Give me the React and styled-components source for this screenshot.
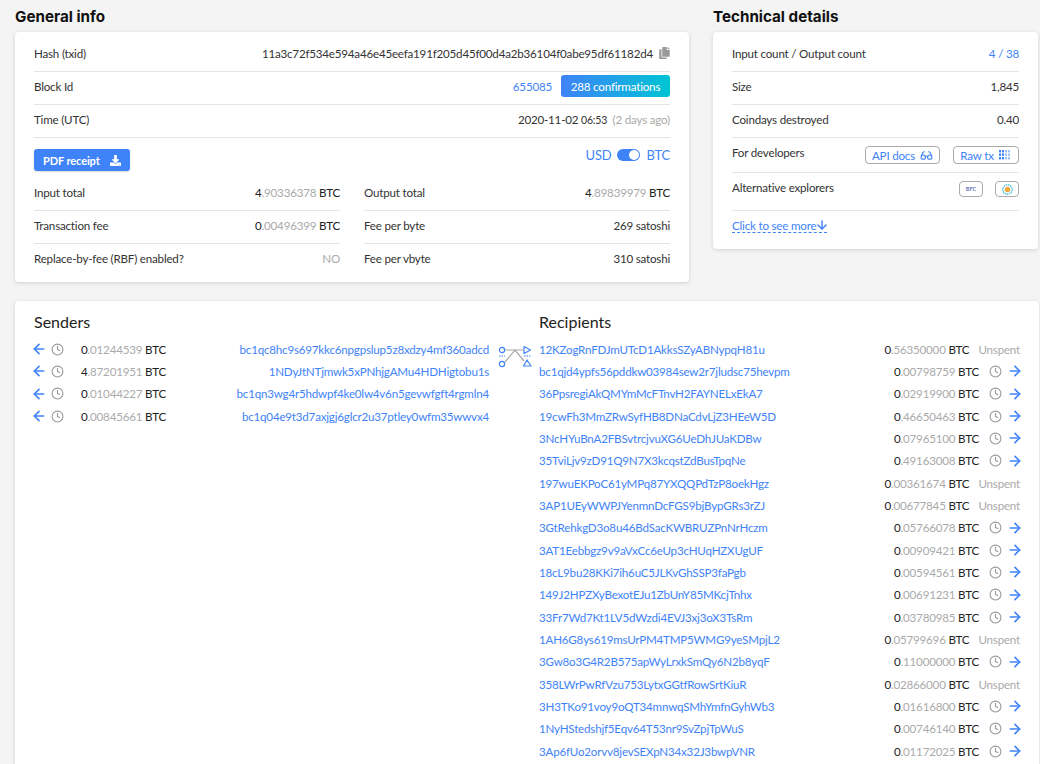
import styled, { createGlobalStyle } from "styled-components";
import { ArrowLeft, ArrowRight, ArrowDown, Clock, Glasses } from "lucide-react";
import { FaCopy, FaDownload } from "react-icons/fa";

const BLUE = "#3f83f8";

const senders = [
  ["0.01244539", "bc1qc8hc9s697kkc6npgpslup5z8xdzy4mf360adcd"],
  ["4.87201951", "1NDyJtNTjmwk5xPNhjgAMu4HDHigtobu1s"],
  ["0.01044227", "bc1qn3wg4r5hdwpf4ke0lw4v6n5gevwfgft4rgmln4"],
  ["0.00845661", "bc1q04e9t3d7axjgj6glcr2u37ptley0wfm35wwvx4"],
];

const recipients = [
  ["12KZogRnFDJmUTcD1AkksSZyABNypqH81u", "0.56350000", true],
  ["bc1qjd4ypfs56pddkw03984sew2r7jludsc75hevpm", "0.00798759"],
  ["36PpsregiAkQMYmMcFTnvH2FAYNELxEkA7", "0.02919900"],
  ["19cwFh3MmZRwSyfHB8DNaCdvLjZ3HEeW5D", "0.46650463"],
  ["3NcHYuBnA2FBSvtrcjvuXG6UeDhJUaKDBw", "0.07965100"],
  ["35TviLjv9zD91Q9N7X3kcqstZdBusTpqNe", "0.49163008"],
  ["197wuEKPoC61yMPq87YXQQPdTzP8oekHgz", "0.00361674", true],
  ["3AP1UEyWWPJYenmnDcFGS9bjBypGRs3rZJ", "0.00677845", true],
  ["3GtRehkgD3o8u46BdSacKWBRUZPnNrHczm", "0.05766078"],
  ["3AT1Eebbgz9v9aVxCc6eUp3cHUqHZXUgUF", "0.00909421"],
  ["18cL9bu28KKi7ih6uC5JLKvGhSSP3faPgb", "0.00594561"],
  ["149J2HPZXyBexotEJu1ZbUnY85MKcjTnhx", "0.00691231"],
  ["33Fr7Wd7Kt1LV5dWzdi4EVJ3xj3oX3TsRm", "0.03780985"],
  ["1AH6G8ys619msUrPM4TMP5WMG9yeSMpjL2", "0.05799696", true],
  ["3Gw8o3G4R2B575apWyLrxkSmQy6N2b8yqF", "0.11000000"],
  ["358LWrPwRfVzu753LytxGGtfRowSrtKiuR", "0.02866000", true],
  ["3H3TKo91voy9oQT34mnwqSMhYmfnGyhWb3", "0.01616800"],
  ["1NyHStedshjf5Eqv64T53nr9SvZpjTpWuS", "0.00746140"],
  ["3Ap6fUo2orvv8jevSEXpN34x32J3bwpVNR", "0.01172025"],
];

const GlobalStyle = createGlobalStyle`
  html, body {
    margin: 0;
    height: 764px;
    overflow: hidden;
    background: #f4f4f4;
  }
  body {
    font-family: "Lato", "Liberation Sans", sans-serif;
    font-size: 11.6px;
    letter-spacing: -0.2px;
    color: #333;
  }
`;

const Page = styled.div`
  padding: 7px 1px 0 15px;
`;

const TopGrid = styled.div`
  display: grid;
  grid-template-columns: 674px 325px;
  column-gap: 24px;
  align-items: start;
  margin-bottom: 19px;
`;

const Title = styled.h2`
  margin: 0 0 6px;
  height: 19px;
  line-height: 19px;
  font-family: "Inter", sans-serif;
  font-size: 15.2px;
  font-weight: 700;
  letter-spacing: 0;
  color: #111;
`;

const Card = styled.div`
  background: #fff;
  border-radius: 4px;
  box-shadow: 0 1px 4px rgba(0, 0, 0, 0.14);
  padding: ${(p) => p.$padding || "7px 19px 5px"};
`;

const Row = styled.div`
  display: flex;
  align-items: center;
  justify-content: space-between;
  height: ${(p) => p.$height || 33}px;
  padding-bottom: 4px;
  border-bottom: ${(p) => (p.$plain ? "none" : "1px solid #e5e5e5")};
  box-sizing: border-box;
`;

const Right = styled.div`
  display: flex;
  align-items: center;
  gap: ${(p) => p.$gap || 9}px;
`;

const CopyIcon = styled(FaCopy)`
  width: 11px;
  height: 12px;
  color: #999;
`;

const Link = styled.a`
  color: ${BLUE};
  text-decoration: none;
`;

const Badge = styled.span`
  display: flex;
  align-items: center;
  justify-content: center;
  width: 109px;
  height: 22px;
  border-radius: 3px;
  color: #fff;
  background: linear-gradient(90deg, #3f83f8, #00c4d4);
`;

const Small = styled.span`
  font-size: 10.5px;
`;

const Muted = styled.span`
  color: #aaa;
`;

const ToolRow = styled.div`
  display: flex;
  align-items: flex-start;
  justify-content: space-between;
  box-sizing: border-box;
  padding-top: 11px;
  height: 40px;
`;

const PdfButton = styled.button`
  display: flex;
  align-items: center;
  gap: 10px;
  height: 22px;
  padding: 0 9px;
  border: 0;
  border-radius: 3px;
  background: ${BLUE};
  color: #fff;
  font: 700 11px "Lato", sans-serif;
  letter-spacing: -0.1px;
  box-shadow: 0 1px 2px rgba(0, 0, 0, 0.15);
`;

const Currency = styled.div`
  display: flex;
  align-items: center;
  gap: 6px;
  margin-top: -2px;
  color: ${BLUE};
  font-size: 13px;
`;

const Toggle = styled.span`
  position: relative;
  display: block;
  width: 23px;
  height: 12px;
  border-radius: 6px;
  background: ${BLUE};

  &::after {
    content: "";
    position: absolute;
    top: 1px;
    right: 1px;
    width: 10px;
    height: 10px;
    border-radius: 50%;
    background: #fff;
  }
`;

const TwoCols = styled.div`
  display: grid;
  grid-template-columns: 306px 306px;
  column-gap: 24px;
`;

const Decimals = styled.span`
  color: #aaa;
`;

const Btc = styled.span`
  color: #222;
`;

const Whole = styled.span`
  color: #222;
`;

const Amount = ({ value }) => (
  <span>
    <Whole>{value[0]}</Whole>
    <Decimals>{value.slice(1)}</Decimals> <Btc>BTC</Btc>
  </span>
);

const OutlineButton = styled.a`
  display: flex;
  align-items: center;
  justify-content: center;
  gap: ${(p) => p.$gap || 5}px;
  box-sizing: border-box;
  width: ${(p) => p.$width}px;
  height: ${(p) => p.$height || 18}px;
  border: 1px solid #aaa;
  border-radius: 4px;
  color: ${BLUE};
`;

const Developers = styled(Row)`
  align-items: flex-start;
  padding-top: 8px;
`;

const TinyLogo = styled.svg`
  display: block;
`;

const TinyLabel = styled.span`
  font-size: 5.5px;
  font-weight: 900;
  letter-spacing: 0;
  color: #6f7fc0;
`;

const SeeMore = styled.a`
  display: flex;
  align-items: center;
  width: fit-content;
  margin-top: 7px;
  height: 14px;
  color: ${BLUE};
  border-bottom: 1px dashed ${BLUE};
`;

const MoreArrow = styled(ArrowDown)`
  width: 14px;
  height: 14px;
  margin: 0 -2px 0 -1px;
`;

const FlowCard = styled(Card)`
  height: 480px;
`;

const FlowGrid = styled.div`
  display: grid;
  grid-template-columns: 456px 49px 481px;
`;

const FlowTitle = styled.h3`
  margin: 0 0 6px;
  height: 22px;
  line-height: 22px;
  font-size: 16px;
  font-weight: 400;
  letter-spacing: 0;
  color: #222;
`;

const FlowRow = styled.div`
  display: flex;
  align-items: center;
  box-sizing: border-box;
  height: 22.33px;
  padding-bottom: 2px;
`;

const SenderArrow = styled(ArrowLeft)`
  width: 16px;
  height: 16px;
  margin: 0 -3px;
  color: ${BLUE};
`;

const ClockIcon = styled(Clock)`
  width: 13px;
  height: 13px;
  color: #999;
  margin: ${(p) => p.$margin || 0};
`;

const SenderAmount = styled.span`
  margin-left: 17px;
`;

const Address = styled(Link)`
  margin-left: ${(p) => (p.$alignEnd ? "auto" : 0)};
  margin-right: ${(p) => (p.$alignEnd ? "1px" : "auto")};
`;

const SwapWrap = styled.div`
  padding: 34px 0 0 8px;
`;

const RecipientArrow = styled(ArrowRight)`
  width: 16px;
  height: 16px;
  margin: 0 -3px 0 5px;
  color: ${BLUE};
`;

const Unspent = styled.span`
  margin-left: 9px;
  color: #aaa;
`;

const SwapIcon = () => (
  <svg width="35" height="23" viewBox="0 0 35 23" fill="none">
    <path d="M7 5H25M7 17L17 5L26 16" stroke="#aaa" strokeWidth="1.2" />
    <circle cx="4" cy="5" r="2.6" stroke={BLUE} strokeWidth="1.2" />
    <circle cx="4" cy="19" r="2.6" stroke={BLUE} strokeWidth="1.2" />
    <path d="M26 1.5L32.5 5L26 8.5Z" stroke={BLUE} strokeWidth="1.2" strokeLinejoin="round" />
    <path d="M29 15L33 21H25.5Z" stroke={BLUE} strokeWidth="1.2" strokeLinejoin="round" />
    <path d="M1 11H7M26 11H33" stroke={BLUE} strokeWidth="1.2" strokeDasharray="1.5 1" />
  </svg>
);

const DotsIcon = () => (
  <svg width="13" height="10" viewBox="0 0 13 10" fill={BLUE}>
    {[0, 3.5, 7].map((y) =>
      [0, 3, 6, 9].map((x) => (
        <rect key={`${x}-${y}`} x={x} y={y} width="2" height="2.4" opacity={x > 5 ? 0.5 : 1} />
      ))
    )}
  </svg>
);

const CoinLogo = () => (
  <TinyLogo width="11" height="11" viewBox="0 0 11 11">
    <circle cx="5.5" cy="5.5" r="4.7" fill="none" stroke="#22b8d6" strokeWidth="1.2" strokeDasharray="1.4 .8" />
    <circle cx="5.5" cy="5.5" r="2.7" fill="#f0a63a" />
  </TinyLogo>
);

const App = () => (
  <Page>
    <GlobalStyle />
    <TopGrid>
      <section>
        <Title>General info</Title>
        <Card>
          <Row>
            <span>Hash (txid)</span>
            <Right $gap={6}>
              <span>11a3c72f534e594a46e45eefa191f205d45f00d4a2b36104f0abe95df61182d4</span>
              <CopyIcon />
            </Right>
          </Row>
          <Row>
            <span>Block Id</span>
            <Right>
              <Link>655085</Link>
              <Badge>288 confirmations</Badge>
            </Right>
          </Row>
          <Row>
            <span>Time (UTC)</span>
            <span>
              2020-11-02 <Small>06:53</Small> <Muted>&nbsp;(2 days ago)</Muted>
            </span>
          </Row>
          <ToolRow>
            <PdfButton>
              PDF receipt <FaDownload size={11} />
            </PdfButton>
            <Currency>
              USD <Toggle /> BTC
            </Currency>
          </ToolRow>
          <TwoCols>
            <div>
              <Row>
                <span>Input total</span>
                <Amount value="4.90336378" />
              </Row>
              <Row>
                <span>Transaction fee</span>
                <Amount value="0.00496399" />
              </Row>
              <Row $plain>
                <span>Replace-by-fee (RBF) enabled?</span>
                <Muted>NO</Muted>
              </Row>
            </div>
            <div>
              <Row>
                <span>Output total</span>
                <Amount value="4.89839979" />
              </Row>
              <Row>
                <span>Fee per byte</span>
                <span>269 satoshi</span>
              </Row>
              <Row $plain>
                <span>Fee per vbyte</span>
                <span>310 satoshi</span>
              </Row>
            </div>
          </TwoCols>
        </Card>
      </section>
      <section>
        <Title>Technical details</Title>
        <Card $padding="7px 19px 16px">
          <Row>
            <span>Input count / Output count</span>
            <Link>4 / 38</Link>
          </Row>
          <Row>
            <span>Size</span>
            <span>1,845</span>
          </Row>
          <Row>
            <span>Coindays destroyed</span>
            <span>0.40</span>
          </Row>
          <Developers $height={35}>
            <span>For developers</span>
            <Right $gap={13}>
              <OutlineButton $width={75}>
                API docs <Glasses size={13} />
              </OutlineButton>
              <OutlineButton $width={66}>
                Raw tx <DotsIcon />
              </OutlineButton>
            </Right>
          </Developers>
          <Developers $height={38}>
            <span>Alternative explorers</span>
            <Right $gap={12}>
              <OutlineButton $width={24} $height={16}>
                <TinyLabel>BFC</TinyLabel>
              </OutlineButton>
              <OutlineButton $width={24} $height={16}>
                <CoinLogo />
              </OutlineButton>
            </Right>
          </Developers>
          <SeeMore>
            Click to see more <MoreArrow strokeWidth={2.5} />
          </SeeMore>
        </Card>
      </section>
    </TopGrid>
    <FlowCard $padding="10px 19px">
      <FlowGrid>
        <div>
          <FlowTitle>Senders</FlowTitle>
          {senders.map(([amount, address]) => (
            <FlowRow key={address}>
              <SenderArrow strokeWidth={2.5} />
              <ClockIcon $margin="0 0 0 7px" strokeWidth={2} />
              <SenderAmount>
                <Amount value={amount} />
              </SenderAmount>
              <Address $alignEnd>{address}</Address>
            </FlowRow>
          ))}
        </div>
        <SwapWrap>
          <SwapIcon />
        </SwapWrap>
        <div>
          <FlowTitle>Recipients</FlowTitle>
          {recipients.map(([address, amount, unspent]) => (
            <FlowRow key={address}>
              <Address>{address}</Address>
              <Amount value={amount} />
              {unspent ? (
                <Unspent>Unspent</Unspent>
              ) : (
                <>
                  <ClockIcon $margin="0 0 0 10px" strokeWidth={2} />
                  <RecipientArrow strokeWidth={2.5} />
                </>
              )}
            </FlowRow>
          ))}
        </div>
      </FlowGrid>
    </FlowCard>
  </Page>
);

export default App;
